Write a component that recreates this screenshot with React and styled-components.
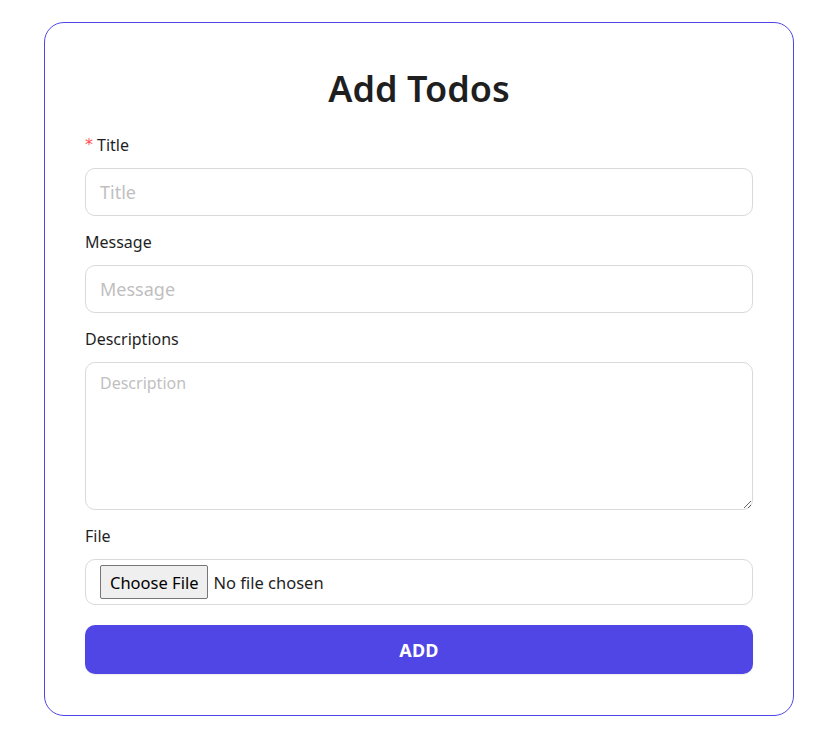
import React from "react";
import styled, { createGlobalStyle } from "styled-components";

const Global = createGlobalStyle`
  * { box-sizing: border-box; }
  body {
    margin: 0;
    background: #ffffff;
    font-family: "Noto Sans", "Open Sans", sans-serif;
    color: #1f1f1f;
  }
`;

const Page = styled.div`
  padding: 22px 42px 26px 44px;
`;

const Card = styled.form`
  width: 750px;
  border: 1px solid #4f46e5;
  border-radius: 20px;
  padding: 38px 40px 41px;
  display: flex;
  flex-direction: column;
`;

const Heading = styled.h1`
  margin: 0 0 16px;
  text-align: center;
  font-size: 36px;
  line-height: 56px;
  font-weight: 600;
  color: #1f1f1f;
`;

const Field = styled.div`
  display: flex;
  flex-direction: column;
  margin-bottom: ${(p) => (p.$last ? "20px" : "14px")};
`;

const Label = styled.label`
  font-size: 16px;
  line-height: 24px;
  margin-bottom: 11px;
  color: #1f1f1f;
  display: flex;
  align-items: center;
  gap: 4px;
`;

const Star = styled.span`
  color: #ff4d4f;
  font-size: 16px;
  font-family: "DejaVu Sans", sans-serif;
`;

const Input = styled.input`
  height: 48px;
  border: 1px solid #d9d9d9;
  border-radius: 10px;
  padding: 0 14px;
  font-family: inherit;
  font-size: 18px;
  color: #1f1f1f;
  outline: none;
  &::placeholder { color: #bfbfbf; }
`;

const TextArea = styled.textarea`
  height: 148px;
  border: 1px solid #d9d9d9;
  border-radius: 10px;
  padding: 8px 14px;
  font-family: inherit;
  font-size: 16px;
  line-height: 24px;
  color: #1f1f1f;
  outline: none;
  resize: vertical;
  &::placeholder { color: #bfbfbf; }
`;

const FileBox = styled.div`
  height: 46px;
  border: 1px solid #d9d9d9;
  border-radius: 10px;
  padding: 0 14px;
  display: flex;
  align-items: center;
`;

const FileInput = styled.input`
  font-family: inherit;
  font-size: 16.5px;
  color: #1f1f1f;
  &::file-selector-button {
    font-family: inherit;
    font-size: 16.5px;
    height: 34px;
    padding: 0 9px;
    margin-right: 5px;
    background: #efefef;
    border: 1px solid #767676;
    border-radius: 2px;
    color: #000;
  }
`;

const Submit = styled.button`
  height: 49px;
  border: none;
  border-radius: 10px;
  background: #4f46e5;
  color: #ffffff;
  font-family: inherit;
  font-size: 18px;
  font-weight: 700;
  letter-spacing: 0.3px;
  box-shadow: 0 1px 2px rgba(0, 0, 0, 0.08);
`;

export default function App() {
  return (
    <>
      <Global />
      <Page>
        <Card onSubmit={(e) => e.preventDefault()}>
          <Heading>Add Todos</Heading>
          <Field>
            <Label>
              <Star>*</Star>Title
            </Label>
            <Input placeholder="Title" />
          </Field>
          <Field>
            <Label>Message</Label>
            <Input placeholder="Message" />
          </Field>
          <Field>
            <Label>Descriptions</Label>
            <TextArea placeholder="Description" />
          </Field>
          <Field $last>
            <Label>File</Label>
            <FileBox>
              <FileInput type="file" />
            </FileBox>
          </Field>
          <Submit type="submit">ADD</Submit>
        </Card>
      </Page>
    </>
  );
}
